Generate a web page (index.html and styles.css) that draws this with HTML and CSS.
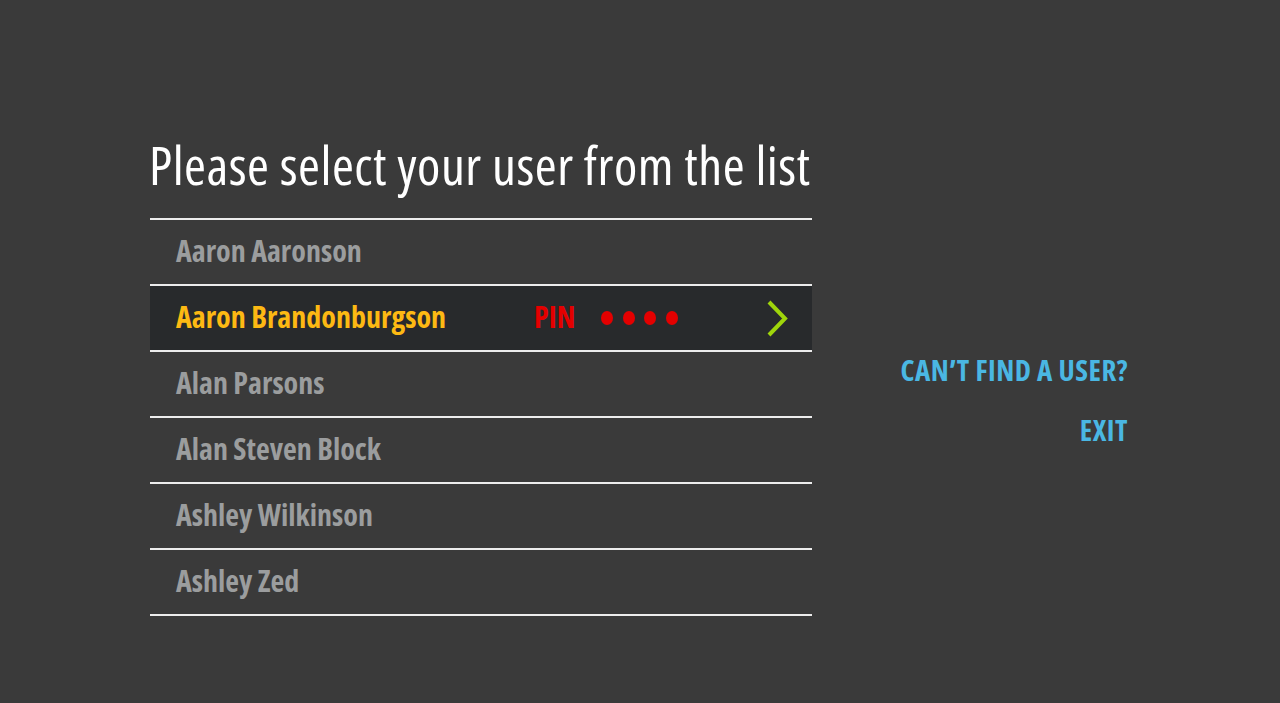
FILE: index.html
```html
<!DOCTYPE html>
<html lang="en">
<head>
<meta charset="utf-8">
<title>Select user</title>
<link rel="stylesheet" href="styles.css">
</head>
<body>
<main class="screen">
  <section class="picker">
    <h1 class="title">Please select your user from the list</h1>
    <ul class="users">
      <li class="user">Aaron Aaronson</li>
      <li class="user selected">
        <span class="name">Aaron Brandonburgson</span>
        <span class="pin">PIN</span>
        <span class="dots"><i></i><i></i><i></i><i></i></span>
        <svg class="chev" width="22" height="37" viewBox="0 0 22 37"><polyline points="3,2 19,18.5 3,35" fill="none" stroke="#9fd50b" stroke-width="4" stroke-linejoin="miter"/></svg>
      </li>
      <li class="user">Alan Parsons</li>
      <li class="user">Alan Steven Block</li>
      <li class="user">Ashley Wilkinson</li>
      <li class="user">Ashley Zed</li>
    </ul>
  </section>
  <nav class="links">
    <a class="link">CAN’T FIND A USER?</a>
    <a class="link">EXIT</a>
  </nav>
</main>
</body>
</html>
```
FILE: styles.css
```css
html, body {
  margin: 0;
  padding: 0;
  background: #3a3a3a;
  height: 100%;
}
body {
  font-family: "Open Sans", "Roboto", sans-serif;
  font-stretch: 75%;
  overflow: hidden;
}
.screen {
  display: flex;
  padding: 135px 152px 0 150px;
}
.picker {
  width: 662px;
}
.title {
  margin: 0 0 23px -1px;
  font-size: 53px;
  line-height: 60px;
  font-weight: normal;
  letter-spacing: 0.5px;
  color: #ffffff;
  white-space: nowrap;
}
.users {
  list-style: none;
  margin: 0;
  padding: 0;
  border-top: 2px solid #ececec;
}
.user {
  height: 61px;
  padding: 0 24px 3px 26px;
  border-bottom: 2px solid #ececec;
  display: flex;
  align-items: center;
  font-size: 30px;
  font-weight: bold;
  color: #9b9d9e;
}
.user.selected {
  background: #282a2c;
  color: #fdb913;
}
.name {
  width: 358px;
}
.pin {
  color: #e40000;
  width: 67px;
}
.dots {
  display: flex;
  gap: 9.5px;
  margin-top: 3px;
}
.dots i {
  display: block;
  width: 12px;
  height: 14px;
  border-radius: 50%;
  background: #e40000;
}
.chev {
  margin: 3px 0 0 auto;
  display: block;
}
.links {
  margin-left: auto;
  padding-top: 218px;
  display: flex;
  flex-direction: column;
  align-items: flex-end;
  gap: 26px;
}
.link {
  font-size: 29px;
  line-height: 34px;
  font-weight: bold;
  letter-spacing: 0.5px;
  color: #4ab7e3;
  white-space: nowrap;
}
```
